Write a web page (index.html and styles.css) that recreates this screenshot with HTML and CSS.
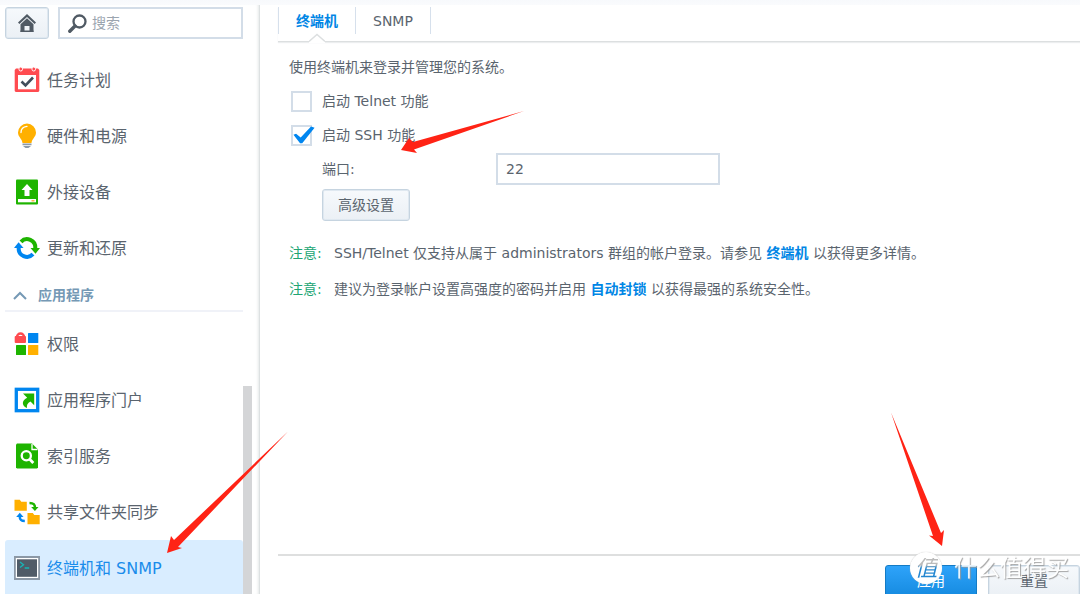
FILE: index.html
```html
<!DOCTYPE html>
<html lang="zh-CN">
<head>
<meta charset="utf-8">
<title>终端机和 SNMP</title>
<link rel="stylesheet" href="styles.css">
</head>
<body>
<div class="window">
  <div class="topstrip"></div>
  <div class="panes">
    <aside class="sidebar">
      <div class="toolbar">
        <button class="btn home" type="button" aria-label="主页">
          <svg width="18" height="18" viewBox="0 0 18 18"><path d="M9 0 18 8.500 16.600 10 9 3 1.400 10 0 8.500Z" fill="#505a64"/><path d="M9 4.200 15.500 10.200V18H11.500V12H6.500V18H2.500V10.200Z" fill="#505a64"/><path d="M2.500 16.500h13V18h-13z" fill="#505a64"/></svg>
        </button>
        <div class="search">
          <svg width="19" height="19" viewBox="0 0 19 19" fill="none" stroke="#505a64"><circle cx="11.500" cy="7.500" r="6" stroke-width="2.300"/><path d="M7 12 1.800 17.200" stroke-width="3.400" stroke-linecap="round"/></svg>
          <input class="search-input" type="text" placeholder="搜索" aria-label="搜索">
        </div>
      </div>
      <nav class="nav">
        <a class="item" href="#">
          <svg class="icon" viewBox="0 0 26 26"><path d="M2 1.500h22l1.300 1.500v21l-1 1H1.700l-1-1V3Z" fill="#ff4b50"/><path d="M4 8h18v14.300H4z" fill="#fff"/><rect x="5" y="0" width="3.500" height="4" rx="1.700" fill="#ff4b50" stroke="#fff"/><rect x="18" y="0" width="3.500" height="4" rx="1.700" fill="#ff4b50" stroke="#fff"/><path d="m7.500 14.500 4 4 7.500-8" fill="none" stroke="#414e5c" stroke-width="2.600"/></svg>
          <span>任务计划</span></a>
        <a class="item" href="#">
          <svg class="icon" viewBox="0 0 26 26"><path d="M13 .5a9 9 0 0 1 9 9c0 4.500-4 6-4.500 10.500h-9C8 15.500 4 14 4 9.500a9 9 0 0 1 9-9Z" fill="#ffb000"/><path d="M7 9.500c0-4 2.500-5.800 6-6.200" fill="none" stroke="#fff" stroke-width="1.300" stroke-linecap="round"/><path d="M8.500 20.500h9v1.800h-9zM9 23h8l-2.500 2h-3z" fill="#8d9aa8"/></svg>
          <span>硬件和电源</span></a>
        <a class="item" href="#">
          <svg class="icon" viewBox="0 0 26 26"><rect x="2" y=".5" width="22" height="25" rx="1" fill="#1eb400"/><path d="m13 5 5.500 6H15.500v6h-5v-6h-3z" fill="#fff"/><path d="M4 20h18v3.300H4z" fill="#fff"/><path d="M17.500 21h3v1.500h-3z" fill="#ffb34d"/></svg>
          <span>外接设备</span></a>
        <a class="item" href="#">
          <svg class="icon" viewBox="0 0 26 26"><g fill="none" stroke-width="4"><path d="M7 6.800A8.300 8.300 0 0 1 21.300 13" stroke="#1eb400"/><path d="M19 19.200A8.300 8.300 0 0 1 4.700 13" stroke="#0086f0"/></g><path d="M16.500 13H26l-4.500 5.700z" fill="#1eb400"/><path d="M0 13h9.500L4.600 7.300z" fill="#0086f0"/></svg>
          <span>更新和还原</span></a>
        <button class="section" type="button">
          <svg width="14" height="9" viewBox="0 0 14 9"><path d="m1 8 6-6 6 6" fill="none" stroke="#7599b5" stroke-width="2"/></svg>
          <span>应用程序</span></button>
        <a class="item" href="#">
          <svg class="icon" viewBox="0 0 26 26"><path d="M3 6a3.500 3.500 0 0 1 7 0" fill="none" stroke="#ff4b50" stroke-width="2.500"/><rect x=".7" y="5" width="11.300" height="7" rx="1" fill="#ff4b50"/><rect x="14" y="2" width="10.300" height="10" rx=".5" fill="#0086f0"/><rect x="2" y="14" width="10" height="10" rx=".5" fill="#1eb400"/><rect x="14" y="14" width="10.300" height="10" rx=".5" fill="#ffb000"/></svg>
          <span>权限</span></a>
        <a class="item" href="#">
          <svg class="icon" viewBox="0 0 26 26"><rect x="2.300" y="2.300" width="21.400" height="21.400" fill="#fff" stroke="#0086f0" stroke-width="3.300"/><path d="M9 6.500h11.200v11.700l-3.700-3.700c-3 1.500-4 3.500-3.500 6.500-4.500-1.500-6.500-7 .2-10.200z" fill="#1eb400"/></svg>
          <span>应用程序门户</span></a>
        <a class="item" href="#">
          <svg class="icon" viewBox="0 0 26 26"><path d="M3 .5h15l6 6v18l-1 1H3l-1-1v-23z" fill="#1eb400"/><path d="M18 1v5.500h5.500" fill="none" stroke="#fff" stroke-width="1.300"/><circle cx="12.300" cy="12.800" r="4.600" fill="none" stroke="#fff" stroke-width="2.300"/><path d="m15.500 16 3.800 4" stroke="#fff" stroke-width="2.800"/></svg>
          <span>索引服务</span></a>
        <a class="item" href="#">
          <svg class="icon" viewBox="0 0 26 26"><path d="M.5.800h5.300l1.500 2h5.500v9H.500zM13.500 14h5.300l1.500 2h5.400v9.200H13.500z" fill="#ffb000"/><path d="M15.500 4c4 0 5.500 1 5.500 5" fill="none" stroke="#1eb400" stroke-width="2.600"/><path d="M17.200 8h7.300l-3.600 4z" fill="#1eb400"/><path d="M10.800 22c-4 0-5-1-5-4.500" fill="none" stroke="#0086f0" stroke-width="2.600"/><path d="M2.200 18h7.300l-3.700-4.200z" fill="#0086f0"/></svg>
          <span>共享文件夹同步</span></a>
        <a class="item selected" href="#">
          <svg class="icon" viewBox="0 0 26 26"><rect x=".8" y="2" width="24.400" height="22" fill="#fff" stroke="#8b98a6" stroke-width="2"/><rect x="3" y="4.300" width="20" height="17.500" fill="#505b67"/><path d="m6 7 3.500 2.800L6 12.600M10.700 13h4.500" fill="none" stroke="#16b7b7" stroke-width="1.300"/></svg>
          <span>终端机和 SNMP</span></a>
      </nav>
      <div class="scrollbar"></div>
    </aside>
    <main class="main">
      <div class="tabs" role="tablist">
        <button class="tab active" type="button" role="tab" aria-selected="true">终端机
          <svg class="notch" width="16" height="10" viewBox="0 0 16 10"><path d="M0 8 8 1l8 7v2H0z" fill="#fff"/><path d="M0 8.500 8 1.500l8 7" fill="none" stroke="#dcdfe0" stroke-width="1.500"/></svg>
        </button>
        <button class="tab" type="button" role="tab" aria-selected="false">SNMP</button>
      </div>
      <form class="content">
        <p class="line intro">使用终端机来登录并管理您的系统。</p>
        <label class="line check"><input type="checkbox"><span>启动 Telnet 功能</span></label>
        <label class="line check"><input type="checkbox" checked><span>启动 SSH 功能</span></label>
        <div class="line field"><label for="port">端口:</label><input class="port" id="port" type="text" value="22"></div>
        <button class="btn advanced" type="button">高级设置</button>
        <div class="note"><span class="tag">注意:</span><p>SSH/Telnet 仅支持从属于 administrators 群组的帐户登录。请参见 <a href="#">终端机</a> 以获得更多详情。</p></div>
        <div class="note"><span class="tag">注意:</span><p>建议为登录帐户设置高强度的密码并启用 <a href="#">自动封锁</a> 以获得最强的系统安全性。</p></div>
      </form>
      <footer class="footer">
        <button class="btn action primary" type="button">应用</button>
        <button class="btn action" type="button">重置</button>
      </footer>
    </main>
  </div>
  <svg class="arrows" width="1080" height="594" viewBox="0 0 1080 594" fill="#ff2315"><path d="M524 111 413 142 409 138 401 150 417 153 414 149.500Z"/><path d="M288 431.500 174 540 171 536 167 553 182 548 178 547Z"/><path d="M891 412.500 933 536 929 535.500 942 546 944 530 941 533Z"/></svg>
  <div class="watermark"><span class="badge"><span>值</span></span><span class="brand">什么值得买</span></div>
</div>
</body>
</html>
```
FILE: styles.css
```css
* { box-sizing: border-box; }
body {
  margin: 0;
  font: 14px/20px "DejaVu Sans", "Noto Sans CJK SC", sans-serif;
  color: #5a646e;
  background: #fff;
}
button, input { font: inherit; color: inherit; }
p { margin: 0; }
a { text-decoration: none; color: inherit; }
.window { position: relative; display: flex; flex-direction: column; height: 100vh; overflow: hidden; }
.topstrip { flex: none; height: 5px; background: linear-gradient(#f7f9fc, #fafbfd); }
.panes { display: flex; flex: 1; min-height: 0; }

.sidebar { position: relative; flex: none; width: 260px; padding: 2px 16px 0 5px; border-right: 1px solid #dde1e2; box-shadow: inset -3px 0 3px -2px #e4e8e8; overflow: hidden; }
.toolbar { display: flex; gap: 9px; height: 32px; margin-bottom: 13px; }
.btn { padding: 0; border: 1px solid #c6d4e0; border-radius: 3px; background: linear-gradient(#f6f9fc, #ebf0f5); box-shadow: inset 0 0 0 1px #dfe8f0; }
.home { display: flex; flex: none; align-items: center; justify-content: center; width: 44px; }
.search { display: flex; flex: 1; min-width: 0; align-items: center; gap: 5px; padding-left: 8px; border: 2px solid #d3dde8; }
.search svg { flex: none; }
.search-input { flex: 1; min-width: 0; padding: 0; border: 0; outline: 0; background: none; }
.search-input::placeholder { color: #9ba5af; opacity: 1; }
.item { display: flex; align-items: center; gap: 7px; height: 56px; padding-left: 9px; border-radius: 3px; font-size: 16px; line-height: 24px; white-space: nowrap; }
.item span { padding-top: 2px; }
.item.selected { color: #1a8ceb; background: #d9edff; }
.icon { flex: none; width: 26px; height: 26px; }
.section { display: flex; align-items: center; gap: 11px; width: 100%; height: 36px; margin-bottom: 4px; padding: 4px 0 0 8px; border: 0; border-bottom: 2px solid #f0f2f8; background: none; color: #7599b5; font-weight: bold; }
.scrollbar { position: absolute; top: 381px; bottom: 0; right: 7px; width: 9px; background: #d4d5d7; }

.main { display: flex; flex: 1; flex-direction: column; min-width: 0; padding: 2px 0 0 18px; }
.tabs { display: flex; height: 35px; padding-bottom: 7px; border-bottom: 1px solid #dcdfe0; box-shadow: 0 1px 1px #eceeef; }
.tab { position: relative; padding: 0 17px; border: 0; border-right: 1px solid #d6e0ec; background: none; }
.tab:first-child { border-left: 1px solid #d6e0ec; }
.tab.active { color: #0086e5; font-weight: bold; }
.notch { position: absolute; left: 30px; bottom: -9px; }
.content { flex: 1; min-height: 0; padding: 8px 11px 0; }
.line { display: flex; align-items: center; height: 34px; }
.check { gap: 10px; padding-left: 2px; }
.check input { appearance: none; width: 21px; height: 21px; margin: 0; border: 2px solid #d3dde8; background: #fff; }
.check input:checked { position: relative; }
.check input:checked::after { content: ""; position: absolute; left: 0; top: -1px; width: 22px; height: 18px; background: #0086f0; clip-path: polygon(2% 52%, 14% 46%, 35% 67%, 82% 6%, 98% 13%, 42% 98%, 32% 98%); }
.field { padding-left: 33px; }
.field label { width: 174px; }
.port { width: 224px; height: 32px; padding: 0 8px; border: 2px solid #d3dde8; outline: 0; }
.advanced { display: block; width: 88px; height: 32px; margin: 3px 0 14px 33px; }
.note { display: flex; height: 36px; align-items: center; white-space: nowrap; }
.note a { color: #0086e5; font-weight: bold; }
.tag { width: 45px; color: #20a573; }
.footer { display: flex; flex: none; gap: 11px; justify-content: flex-end; height: 40px; padding-top: 9px; border-top: 2px solid #dedfdf; }
.action { width: 92px; height: 32px; flex: none; }
.primary { color: #fff; border-color: #147bc5; background: linear-gradient(#2ea3fa, #168be0); box-shadow: none; }

.arrows { position: absolute; left: 0; top: 0; pointer-events: none; }
.watermark { position: absolute; right: 11px; bottom: 10px; display: flex; align-items: center; gap: 12px; pointer-events: none; }
.badge { display: flex; align-items: center; justify-content: center; width: 32px; height: 32px; border-radius: 50%; background: #fff; font-size: 23px; font-style: italic; box-shadow: 0 0 1px #bbb; }
.badge span { color: transparent; background: linear-gradient(#bbb 35%, #2386d0 50%); background-clip: text; }
.brand { color: #fff; font-size: 23px; line-height: 32px; text-shadow: 1px 1px 1px #999; opacity: .9; }
```
